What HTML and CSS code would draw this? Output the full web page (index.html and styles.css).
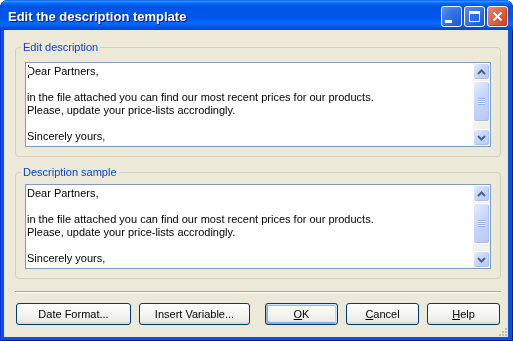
FILE: index.html
```html
<!DOCTYPE html>
<html lang="en">
<head>
  <meta charset="UTF-8">
  <title>Edit the description template</title>
  <link rel="stylesheet" href="styles.css">
</head>
<body>
  <div class="window">
    <div class="titlebar">
      <span class="title">Edit the description template</span>
      <div class="title-buttons">
        <button class="tb tb-min"><span class="min-glyph"></span></button>
        <button class="tb tb-max"><span class="max-glyph"></span></button>
        <button class="tb tb-close">
          <svg width="11" height="11" viewBox="0 0 11 11"><path d="M1.5 1.5 L9.5 9.5 M9.5 1.5 L1.5 9.5" stroke="#fff" stroke-width="2" fill="none"/></svg>
        </button>
      </div>
    </div>

    <div class="client">
      <!-- editable template -->
      <fieldset class="group">
        <legend>Edit description</legend>
        <div class="memo">
          <div class="memo-text focused">Dear Partners,

in the file attached you can find our most recent prices for our products.
Please, update your price-lists accrodingly.

Sincerely yours,</div>
          <div class="scrollbar">
            <div class="sb-btn">
              <svg width="9" height="6" viewBox="0 0 9 6"><path d="M1 5 L4.5 1.5 L8 5" stroke="#4D6185" stroke-width="2" fill="none"/></svg>
            </div>
            <div class="sb-thumb"><span class="grip"></span></div>
            <div class="sb-track"></div>
            <div class="sb-btn">
              <svg width="9" height="6" viewBox="0 0 9 6"><path d="M1 1 L4.5 4.5 L8 1" stroke="#4D6185" stroke-width="2" fill="none"/></svg>
            </div>
          </div>
        </div>
      </fieldset>

      <!-- preview -->
      <fieldset class="group group-sample">
        <legend>Description sample</legend>
        <div class="memo">
          <div class="memo-text">Dear Partners,

in the file attached you can find our most recent prices for our products.
Please, update your price-lists accrodingly.

Sincerely yours,</div>
          <div class="scrollbar">
            <div class="sb-btn">
              <svg width="9" height="6" viewBox="0 0 9 6"><path d="M1 5 L4.5 1.5 L8 5" stroke="#4D6185" stroke-width="2" fill="none"/></svg>
            </div>
            <div class="sb-thumb"><span class="grip"></span></div>
            <div class="sb-track"></div>
            <div class="sb-btn">
              <svg width="9" height="6" viewBox="0 0 9 6"><path d="M1 1 L4.5 4.5 L8 1" stroke="#4D6185" stroke-width="2" fill="none"/></svg>
            </div>
          </div>
        </div>
      </fieldset>

      <div class="separator"></div>

      <div class="buttons">
        <button class="btn btn-date">Date Format...</button>
        <button class="btn btn-insert">Insert Variable...</button>
        <button class="btn btn-ok default"><u>O</u>K</button>
        <button class="btn btn-small"><u>C</u>ancel</button>
        <button class="btn btn-small"><u>H</u>elp</button>
      </div>

      <svg class="size-grip" width="12" height="12" viewBox="0 0 12 12">
        <rect x="9" y="3" width="2" height="2" fill="#C1BDAE"/>
        <rect x="6" y="6" width="2" height="2" fill="#C1BDAE"/>
        <rect x="9" y="6" width="2" height="2" fill="#C1BDAE"/>
        <rect x="3" y="9" width="2" height="2" fill="#C1BDAE"/>
        <rect x="6" y="9" width="2" height="2" fill="#C1BDAE"/>
        <rect x="9" y="9" width="2" height="2" fill="#C1BDAE"/>
      </svg>
    </div>
  </div>
</body>
</html>
```

FILE: styles.css
```css
body {
  margin: 0;
  background: #fff;
  font-family: "Liberation Sans", Arial, sans-serif;
  font-size: 11px;
  color: #000;
}
.window {
  width: 513px;
  height: 341px;
  display: flex;
  flex-direction: column;
  background: #0855DD;
  border-radius: 8px 8px 0 0;
  box-shadow: inset 1px 0 #0831D9, inset -1px 0 #00138C, inset 0 -1px #00138C;
  overflow: hidden;
}
.titlebar {
  height: 30px;
  box-sizing: border-box;
  display: flex;
  align-items: center;
  padding: 3px 5px 0 8px;
  border-radius: 8px 8px 0 0;
  background: linear-gradient(180deg, #0058EE 0%, #3593FF 4%, #288EFF 6%, #127DFF 8%, #036FFC 10%, #0262EE 14%, #0057E5 20%, #0054E3 24%, #0055EB 56%, #005BF5 66%, #026AFE 76%, #0062EF 86%, #0052D6 92%, #0848CF 100%);
}
.title {
  flex: 1;
  color: #fff;
  font-weight: bold;
  font-size: 13px;
  text-shadow: 1px 1px #0F1089;
}
.title-buttons {
  display: flex;
  gap: 2px;
}
.tb {
  width: 21px;
  height: 21px;
  padding: 0;
  border: 1px solid #fff;
  border-radius: 3px;
  display: flex;
  align-items: center;
  justify-content: center;
}
.tb-min,
.tb-max {
  background: radial-gradient(circle at 90% 90%, #1A5EE8 0%, #3672E4 55%, #5A92F2 100%);
  box-shadow: inset -1px -1px #2A5CC4;
}
.tb-close {
  background: radial-gradient(circle at 90% 90%, #CC4628 0%, #DC6542 55%, #E5917A 100%);
  box-shadow: inset -1px -1px #C4381E;
}
.min-glyph {
  width: 7px;
  height: 3px;
  background: #fff;
  align-self: flex-end;
  margin: 0 6px 3px 0;
}
.max-glyph {
  width: 9px;
  height: 7px;
  border: 1px solid #fff;
  border-top-width: 3px;
}
.client {
  flex: 1;
  position: relative;
  margin: 0 5px 4px 4px;
  padding: 11px 7px 0 11px;
  background: #ECE9D8;
  display: flex;
  flex-direction: column;
}
.group {
  margin: 0;
  padding: 8px 9px 9px;
  border: 1px solid #D0D0BF;
  border-radius: 4px;
  min-width: 0;
}
.group legend {
  color: #0046D5;
  padding: 0 2px;
  margin-left: -4px;
  line-height: 13px;
}
.group-sample {
  margin-top: 9px;
  padding-top: 5px;
}
.memo {
  height: 85px;
  box-sizing: border-box;
  border: 1px solid #7F9DB9;
  background: #fff;
  display: flex;
}
.memo-text {
  flex: 1;
  padding: 2px 1px;
  line-height: 13px;
  white-space: pre;
  overflow: hidden;
}
.focused {
  position: relative;
}
.focused::before {
  content: "";
  position: absolute;
  left: 2px;
  top: 2px;
  width: 1px;
  height: 13px;
  background: #fff;
  mix-blend-mode: difference;
}
.scrollbar {
  width: 17px;
  display: flex;
  flex-direction: column;
  background: #F3F1EC;
}
.sb-btn,
.sb-thumb {
  box-sizing: border-box;
  border: 1px solid #fff;
  border-radius: 3px;
  background: linear-gradient(135deg, #E3EBFE 0%, #C6D6FC 45%, #B5C9F8 100%);
  box-shadow: inset -1px -1px #A9BEF0;
  display: flex;
  align-items: center;
  justify-content: center;
}
.sb-btn {
  height: 17px;
}
.sb-thumb {
  height: 41px;
  margin-top: 1px;
}
.sb-track {
  flex: 1;
}
.grip {
  width: 7px;
  height: 7px;
  background: repeating-linear-gradient(180deg, #8CB0F8 0 1px, #EEF4FE 1px 2px);
}
.separator {
  margin-top: 12px;
  border-top: 1px solid #ACA899;
  border-bottom: 1px solid #fff;
}
.buttons {
  display: flex;
  margin: 10px 1px 0;
  gap: 8px;
}
.btn {
  height: 22px;
  padding: 0;
  font-family: "Liberation Sans", Arial, sans-serif;
  font-size: 11px;
  color: #000;
  border: 1px solid #003C74;
  border-radius: 3px;
  background: linear-gradient(180deg, #fff 0%, #ECEBE6 86%, #D6D0C5 100%);
}
.btn-date {
  width: 115px;
}
.btn-insert {
  width: 111px;
  margin-right: 7px;
}
.btn-ok,
.btn-small {
  width: 73px;
}
.default {
  box-shadow: inset -1px 1px #CEE7FF, inset 1px 2px #98B8EA, inset -2px 2px #BCD4F6, inset 1px -1px #89ADE4, inset 2px -2px #89ADE4;
}
.size-grip {
  position: absolute;
  right: 0;
  bottom: 0;
}
```
